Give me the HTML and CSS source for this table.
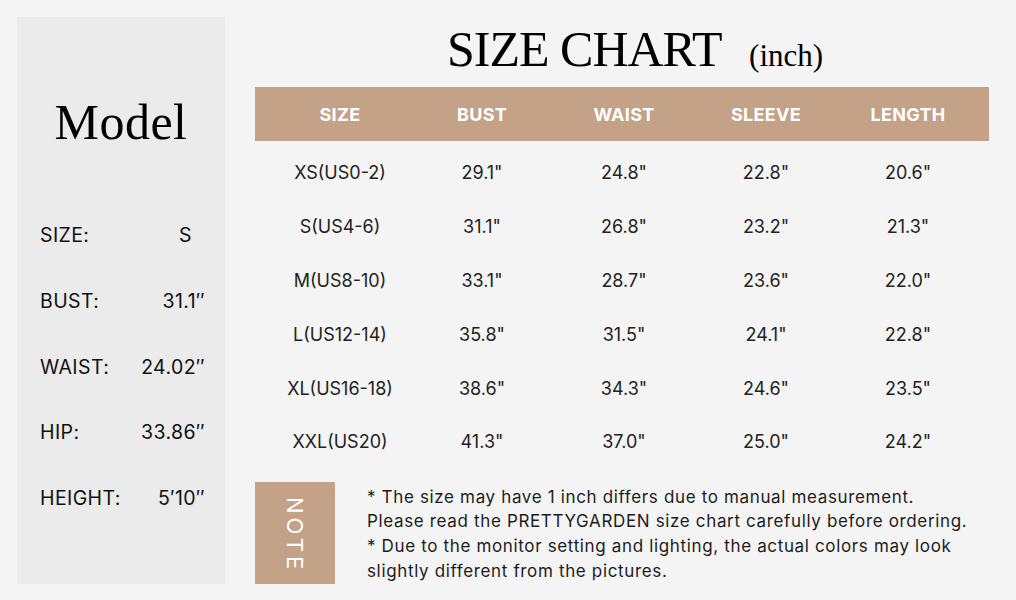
FILE: index.html
```html
<!DOCTYPE html>
<html lang="en">
<head>
<meta charset="utf-8">
<title>Size Chart</title>
<link rel="stylesheet" href="styles.css">
</head>
<body>
<div class="page">
  <aside class="model">
    <h2 class="model-title">Model</h2>
    <dl class="model-list">
      <div class="model-row"><dt>SIZE:</dt><dd>S</dd></div>
      <div class="model-row"><dt>BUST:</dt><dd>31.1″</dd></div>
      <div class="model-row"><dt>WAIST:</dt><dd>24.02″</dd></div>
      <div class="model-row"><dt>HIP:</dt><dd>33.86″</dd></div>
      <div class="model-row"><dt>HEIGHT:</dt><dd>5′10″</dd></div>
    </dl>
  </aside>
  <main class="chart">
    <h1 class="chart-title">SIZE CHART <span class="unit">(inch)</span></h1>
    <div class="table">
      <div class="thead">
        <span>SIZE</span><span>BUST</span><span>WAIST</span><span>SLEEVE</span><span>LENGTH</span>
      </div>
      <div class="tbody">
        <div class="trow"><span>XS(US0-2)</span><span>29.1"</span><span>24.8"</span><span>22.8"</span><span>20.6"</span></div>
        <div class="trow"><span>S(US4-6)</span><span>31.1"</span><span>26.8"</span><span>23.2"</span><span>21.3"</span></div>
        <div class="trow"><span>M(US8-10)</span><span>33.1"</span><span>28.7"</span><span>23.6"</span><span>22.0"</span></div>
        <div class="trow"><span>L(US12-14)</span><span>35.8"</span><span>31.5"</span><span>24.1"</span><span>22.8"</span></div>
        <div class="trow"><span>XL(US16-18)</span><span>38.6"</span><span>34.3"</span><span>24.6"</span><span>23.5"</span></div>
        <div class="trow"><span>XXL(US20)</span><span>41.3"</span><span>37.0"</span><span>25.0"</span><span>24.2"</span></div>
      </div>
    </div>
    <div class="note">
      <div class="note-tag"><span>NOTE</span></div>
      <p class="note-text">* The size may have 1 inch differs due to manual measurement.<br>Please read the PRETTYGARDEN size chart carefully before ordering.<br>* Due to the monitor setting and lighting, the actual colors may look<br>slightly different from the pictures.</p>
    </div>
  </main>
</div>
</body>
</html>
```
FILE: styles.css
```css
* { box-sizing: border-box; }
html, body { margin: 0; padding: 0; }
body {
  background: #f4f4f4;
  width: 1016px;
  height: 600px;
  overflow: hidden;
  font-family: "Inter", "Noto Sans", sans-serif;
  color: #1c1c1c;
}
.page {
  display: flex;
  padding: 17px 0 0 17px;
  gap: 30px;
}
.model {
  width: 208px;
  height: 567px;
  background: #ebebeb;
  display: flex;
  flex-direction: column;
}
.model-title {
  margin: 0;
  padding-top: 80px;
  text-align: center;
  font-family: "Liberation Serif", serif;
  font-weight: 400;
  font-size: 50px;
  line-height: 50px;
  color: #000;
  letter-spacing: 0.5px;
}
.model-list {
  margin: 77px 0 0;
  padding: 0 20px 0 23px;
  display: flex;
  flex-direction: column;
  gap: 43.8px;
}
.model-row {
  display: flex;
  justify-content: space-between;
  font-size: 19.5px;
  line-height: 22px;
  letter-spacing: 0.4px;
  color: #111;
}
.model-row dt, .model-row dd { margin: 0; }
.model-row:first-child dd { padding-right: 13px; }
.chart {
  width: 734px;
  display: flex;
  flex-direction: column;
}
.chart-title {
  margin: 0;
  padding: 2px 0 0 192px;
  height: 70px;
  font-family: "Liberation Serif", serif;
  font-weight: 400;
  font-size: 50px;
  line-height: 60px;
  color: #000;
  letter-spacing: -1px;
}
.unit {
  font-size: 31px;
  margin-left: 17px;
  letter-spacing: 0;
}
.table {
  display: flex;
  flex-direction: column;
}
.thead, .trow {
  display: grid;
  grid-template-columns: 142px 142px 142px 142px 142px;
  padding-left: 14px;
  justify-items: center;
  align-items: center;
}
.thead {
  background: #c4a287;
  height: 54px;
  color: #fff;
  font-weight: 700;
  font-size: 18px;
  letter-spacing: 0.3px;
}
.tbody {
  padding-top: 5px;
}
.trow {
  height: 53.8px;
  font-size: 18px;
  color: #222;
}
.note {
  display: flex;
  gap: 32px;
  margin-top: 13px;
}
.note-tag {
  width: 80px;
  height: 102px;
  background: #c4a287;
  display: flex;
  align-items: center;
  justify-content: center;
}
.note-tag span {
  writing-mode: vertical-rl;
  color: #fff;
  font-size: 22px;
  letter-spacing: 4px;
  padding-top: 4px;
}
.note-text {
  margin: 3px 0 0;
  font-size: 17px;
  line-height: 24.6px;
  color: #1c1c1c;
  letter-spacing: 0.65px;
}
```
